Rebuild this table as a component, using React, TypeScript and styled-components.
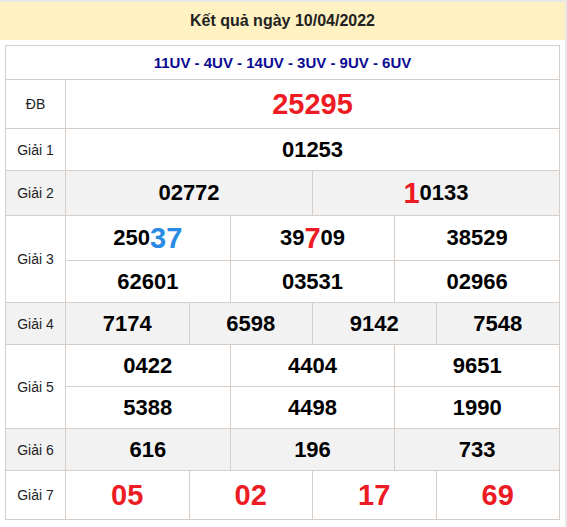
import React from 'react';
import styled, { createGlobalStyle } from 'styled-components';

const Global = createGlobalStyle`
  html, body { margin: 0; padding: 0; background: #e8e8e8; }
  body { font-family: "Liberation Sans", Arial, Helvetica, sans-serif; }
`;

const BORDER = '#d6cfc9';
const ALT = '#f2f2f2';
const RED = '#ed1c24';
const BLUE = '#2a8be4';

const Page = styled.div`
  width: 565px;
  margin-top: 2px;
  background: #fff;
  padding-bottom: 7px;
`;

const Header = styled.div`
  height: 38px;
  background: #fff1c1;
  display: flex;
  align-items: center;
  justify-content: center;
  font-size: 16px;
  font-weight: bold;
  color: #222;
`;

const Table = styled.div`
  margin: 5px 5px 0;
  border: 1px solid ${BORDER};
  background: ${BORDER};
  display: flex;
  flex-direction: column;
  gap: 1px;
`;

const CodesRow = styled.div`
  height: 33px;
  background: #fff;
  display: flex;
  align-items: center;
  justify-content: center;
  font-size: 15px;
  font-weight: bold;
  color: #0b0b92;
`;

const Row = styled.div`
  display: grid;
  grid-template-columns: 59px 1fr;
  gap: 1px;
`;

const Label = styled.div<{ $alt: boolean }>`
  background: ${(p) => (p.$alt ? ALT : '#fff')};
  display: flex;
  align-items: center;
  justify-content: center;
  font-size: 14px;
  color: #1e1e1e;
`;

const Cells = styled.div<{ $cols: number }>`
  display: grid;
  grid-template-columns: repeat(${(p) => p.$cols}, 1fr);
  gap: 1px;
`;

const Cell = styled.div<{ $alt: boolean; $h: number }>`
  height: ${(p) => p.$h}px;
  background: ${(p) => (p.$alt ? ALT : '#fff')};
  display: flex;
  align-items: center;
  justify-content: center;
  font-size: 22px;
  font-weight: bold;
  line-height: 1;
  color: #000;
`;

const Big = styled.span<{ $color: string }>`
  font-size: 29px;
  line-height: 1;
  color: ${(p) => p.$color};
`;

type Part = string | { t: string; c: 'red' | 'blue' };

interface Prize {
  label: string;
  cols: number;
  heights: number[];
  alt: boolean;
  cells: Part[][];
}

const r = (t: string): Part => ({ t, c: 'red' });
const b = (t: string): Part => ({ t, c: 'blue' });

const prizes: Prize[] = [
  { label: 'ĐB', cols: 1, heights: [48], alt: false, cells: [[r('25295')]] },
  { label: 'Giải 1', cols: 1, heights: [41], alt: false, cells: [['01253']] },
  { label: 'Giải 2', cols: 2, heights: [44], alt: true, cells: [['02772'], [r('1'), '0133']] },
  {
    label: 'Giải 3',
    cols: 3,
    heights: [44, 41],
    alt: false,
    cells: [['250', b('37')], ['39', r('7'), '09'], ['38529'], ['62601'], ['03531'], ['02966']],
  },
  { label: 'Giải 4', cols: 4, heights: [41], alt: true, cells: [['7174'], ['6598'], ['9142'], ['7548']] },
  {
    label: 'Giải 5',
    cols: 3,
    heights: [41, 41],
    alt: false,
    cells: [['0422'], ['4404'], ['9651'], ['5388'], ['4498'], ['1990']],
  },
  { label: 'Giải 6', cols: 3, heights: [41], alt: true, cells: [['616'], ['196'], ['733']] },
  { label: 'Giải 7', cols: 4, heights: [48], alt: false, cells: [[r('05')], [r('02')], [r('17')], [r('69')]] },
];

const renderPart = (p: Part, i: number) =>
  typeof p === 'string' ? (
    <React.Fragment key={i}>{p}</React.Fragment>
  ) : (
    <Big key={i} $color={p.c === 'red' ? RED : BLUE}>
      {p.t}
    </Big>
  );

export default function App() {
  return (
    <>
      <Global />
      <Page>
        <Header>Kết quả ngày 10/04/2022</Header>
        <Table>
          <CodesRow>11UV - 4UV - 14UV - 3UV - 9UV - 6UV</CodesRow>
          {prizes.map((pz) => (
            <Row key={pz.label}>
              <Label $alt={pz.alt}>{pz.label}</Label>
              <Cells $cols={pz.cols}>
                {pz.cells.map((parts, i) => (
                  <Cell key={i} $alt={pz.alt} $h={pz.heights[Math.floor(i / pz.cols)]}>
                    {parts.map(renderPart)}
                  </Cell>
                ))}
              </Cells>
            </Row>
          ))}
        </Table>
      </Page>
    </>
  );
}
